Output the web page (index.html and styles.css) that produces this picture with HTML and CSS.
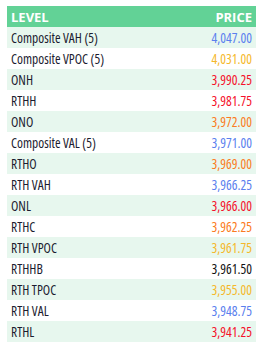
FILE: index.html
```html
<!DOCTYPE html>
<html>
<head>
<meta charset="utf-8">
<link rel="stylesheet" href="styles.css">
</head>
<body>
<table class="levels">
  <thead>
    <tr><th class="lvl">Level</th><th class="px">Price</th></tr>
  </thead>
  <tbody>
    <tr><td>Composite VAH (5)</td><td class="px blue">4,047.00</td></tr>
    <tr><td>Composite VPOC (5)</td><td class="px gold">4,031.00</td></tr>
    <tr><td>ONH</td><td class="px red">3,990.25</td></tr>
    <tr><td>RTHH</td><td class="px red">3,981.75</td></tr>
    <tr><td>ONO</td><td class="px orange">3,972.00</td></tr>
    <tr><td>Composite VAL (5)</td><td class="px blue">3,971.00</td></tr>
    <tr><td>RTHO</td><td class="px orange">3,969.00</td></tr>
    <tr><td>RTH VAH</td><td class="px blue">3,966.25</td></tr>
    <tr><td>ONL</td><td class="px red">3,966.00</td></tr>
    <tr><td>RTHC</td><td class="px orange">3,962.25</td></tr>
    <tr><td>RTH VPOC</td><td class="px gold">3,961.75</td></tr>
    <tr><td>RTHHB</td><td class="px black">3,961.50</td></tr>
    <tr><td>RTH TPOC</td><td class="px gold">3,955.00</td></tr>
    <tr><td>RTH VAL</td><td class="px blue">3,948.75</td></tr>
    <tr><td>RTHL</td><td class="px red">3,941.25</td></tr>
  </tbody>
</table>
</body>
</html>
```
FILE: styles.css
```css
html, body { margin: 0; padding: 0; background: #fff; }
body { padding: 6px 7px; }
.levels {
  width: 249px;
  border-collapse: collapse;
  font-family: "Open Sans", "Liberation Sans", sans-serif;
  font-stretch: 75%;
  font-size: 13.5px;
  color: #1c1c30;
}
.levels th {
  background: #62d296;
  color: #fff;
  font-weight: bold;
  font-stretch: 100%;
  text-transform: uppercase;
  height: 21px;
  padding: 0 4px;
  text-align: left;
  font-size: 13px;
}
.levels td {
  height: 21px;
  padding: 0 4px;
}
.levels tbody tr:nth-child(odd) td { background: #e7f7ee; }
.levels .px { text-align: right; }
.blue { color: #5a80ee; }
.gold { color: #f5b82a; }
.red { color: #f5102a; }
.orange { color: #fb7b22; }
.black { color: #111; }
```
